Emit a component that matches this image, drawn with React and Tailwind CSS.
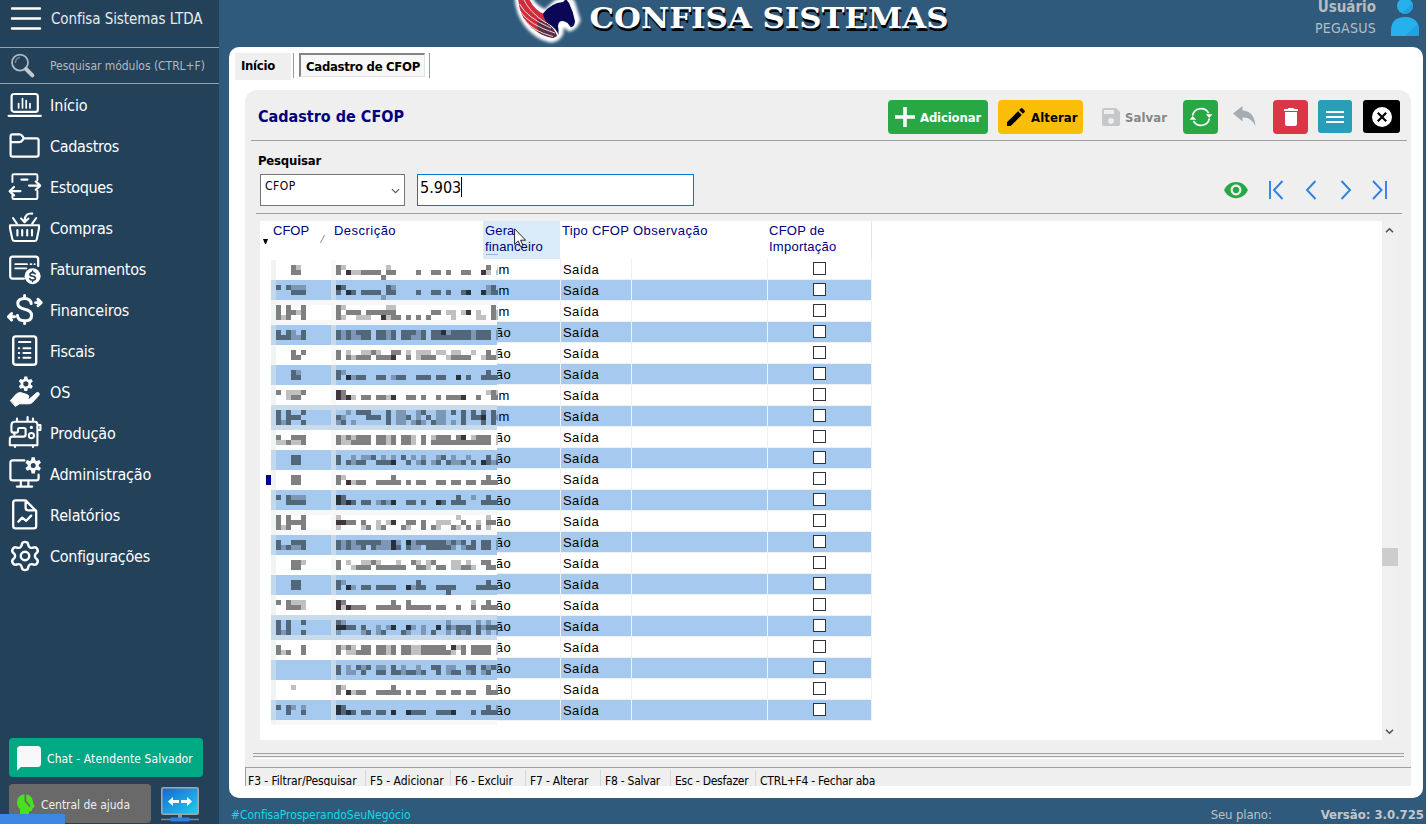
import React from "react";
import { MdEdit, MdSave, MdDelete, MdRemoveRedEye } from "react-icons/md";
import { Settings } from "lucide-react";

const gear = (cx, cy, r1, r2, n) => {
  const p = [];
  for (let i = 0; i < n; i++) {
    const a = (i / n) * Math.PI * 2 - Math.PI / 2;
    const w = Math.PI / n;
    [[-0.75, r1], [-0.38, r2], [0.38, r2], [0.75, r1]].forEach(([k, r]) =>
      p.push(`${(cx + r * Math.cos(a + k * w)).toFixed(2)} ${(cy + r * Math.sin(a + k * w)).toFixed(2)}`)
    );
  }
  return `M${p.join("L")}Z`;
};

const icons = {
  inicio: (
    <>
      <rect x="4.6" y="7" width="26.2" height="17.8" rx="2.4" />
      <path d="M1.6 28.8H33.8" />
      <path d="M11.6 21V16.6M15.5 21V11.6M19.2 21V13.6M23 21V16.6" strokeWidth="1.7" />
    </>
  ),
  cadastros: (
    <path d="M3.6 14.8V8.4Q3.6 6.4 5.4 6.4H12.6Q14.4 6.4 15.6 8.4L16.8 10.4H29.6Q31.6 10.4 31.6 12.6V26.4Q31.6 28.6 29.6 28.6H5.6Q3.6 28.6 3.6 26.4V14.2H12.4Q14.6 14 15.6 12L16.8 10.4" />
  ),
  estoques: (
    <>
      <path d="M5.4 13V6.6Q5.4 5.2 6.8 5.2H29Q30.4 5.2 30.4 6.6V11M5.4 26.5V28.4Q5.4 30 6.8 30H28.8Q30.4 30 30.4 28.4V21.6" strokeWidth="1.9" />
      <path d="M14.4 10.6H20.4M22 16.6H33M28.8 12.4L33.2 16.6L28.8 20.8M13.4 22.2H2.8M7 18L2.6 22.2L7 26.4" strokeWidth="2.2" />
    </>
  ),
  compras: (
    <>
      <path d="M3 15.2H32V18.4L29.8 29.2Q29.4 31 27.6 31H7.6Q5.8 31 5.4 29.2L3 18.4Z" strokeWidth="2.1" />
      <path d="M10.4 20V25.4M15.2 20V25.4M20.2 20V25.4M25 20V25.4M6 8L9.8 13.6M29.2 8L25.2 13.6" strokeWidth="2.1" />
      <path d="M25.2 3.6Q17.8 2.8 17.6 10.6M14 8.4L17.6 12.2L21.4 8.6" strokeWidth="2.1" />
    </>
  ),
  faturamentos: (
    <>
      <path d="M17 27.6H5.6Q3.2 27.6 3.2 25V8.2Q3.2 5.6 5.6 5.6H28.6Q31.2 5.6 31.2 8.2V15" />
      <path d="M8.2 13.2H20M23.6 13.2H24.4M8.2 17.4H19.4M27.4 13.2H27.8" strokeWidth="1.8" />
      <circle cx="25.6" cy="25.2" r="8" fill="#fff" stroke="none" />
      <path d="M28.2 22.8Q27.6 21.6 25.6 21.6Q23 21.6 23 23.4Q23 24.8 25.6 25.2Q28.4 25.6 28.4 27.2Q28.4 29 25.6 29Q23.4 29 22.8 27.6M25.6 20V21.4M25.6 29V30.6" stroke="#24415a" strokeWidth="1.6" />
    </>
  ),
  financeiros: (
    <>
      <path d="M24.2 11.6Q23.6 6.4 17.6 6.4Q10.8 6.4 10.8 11.6Q10.8 16 17.6 17.2Q24.6 18.6 24.6 23.4Q24.6 28.8 17.6 28.8Q10.8 28.8 10.4 23.4M17.6 3.6V6.2M17.6 29V31.6" strokeWidth="3" />
      <path d="M28.6 10.6H32.6M31 7.4L34.2 10.6L31 13.8M7.6 24.8H3.2M4.6 21.6L1.4 24.8L4.6 28" strokeWidth="2.9" />
    </>
  ),
  fiscais: (
    <>
      <rect x="6.2" y="3.4" width="23" height="28.4" rx="2.6" strokeWidth="2.4" />
      <path d="M12 9H23.4M16.4 15.2H23.4M16.4 20H23.4M16.4 24.8H23.4M11.8 15.2H12.2M11.8 20H12.2M11.8 24.8H12.2" strokeWidth="2" />
    </>
  ),
  os: (
    <>
      <path d={`${gear(18.8, 9.8, 5.2, 7.4, 6)}M18.8 7.2a2.6 2.6 0 1 0 0 5.2a2.6 2.6 0 1 0 0-5.2Z`} fill="#fff" fillRule="evenodd" stroke="none" />
      <path d="M3.6 26.4L9.4 20Q12 18 14.6 18.8L20.6 20.8Q22.6 22 21.4 23.8Q20.6 24.6 18.8 24.4L15.4 24.2L22.4 25L29.6 18.8Q31.4 17.8 32.2 19.4Q32.6 20.4 31.8 21.4L25.4 28.4Q24 29.8 21.8 29.8H12.6L8.6 32.2Z" fill="#fff" stroke="#fff" strokeWidth="1" />
    </>
  ),
  producao: (
    <>
      <path d="M7.4 6.8Q4.4 7 4.4 10.4V15.4Q4.4 17.6 6.4 17.6H9.6Q11 17.6 11 16.2V14.2Q11 13 12.4 13H17Q18.6 13 18.6 14.8V19.4Q18.6 21.6 16.4 21.6H5.4Q2.8 21.6 2.8 24.4V30.2H30.4V9.6Q30.4 6.8 27.8 6.8Z" strokeWidth="2.1" />
      <path d="M10 3.6V6M20.6 2.2V6M26 3.6V6M31 10H33.4V15H31M8 30.6V32M26 30.6V32M7.4 17.8V20" strokeWidth="2.2" />
      <circle cx="24.4" cy="20.6" r="2.6" strokeWidth="2" />
      <circle cx="24.4" cy="12.4" r="1.6" fill="#fff" stroke="none" />
    </>
  ),
  administracao: (
    <>
      <path d="M17.4 4.4H5.6Q3.4 4.4 3.4 6.8V22Q3.4 24.4 5.6 24.4H29.4Q31.6 24.4 31.6 22V18.6" strokeWidth="2.2" />
      <path d="M13.8 25V30M21.4 25V30M9.8 30.6H25.2" strokeWidth="2.2" />
      <path d={`${gear(26.2, 9.4, 5.6, 8.2, 6)}M26.2 6.9a2.5 2.5 0 1 0 0 5a2.5 2.5 0 1 0 0-5Z`} fill="#fff" fillRule="evenodd" stroke="none" />
    </>
  ),
  relatorios: (
    <>
      <path d="M18.6 3.4H8.6Q6.2 3.4 6.2 5.8V29Q6.2 31.4 8.6 31.4H26.8Q29.2 31.4 29.2 29V14L18.6 3.4V10.6Q18.6 13.4 21.4 13.4H29" strokeWidth="2.3" />
      <path d="M11.4 24.6L15.2 20.6L19.2 23.8L24.2 18.6" strokeWidth="2.3" />
    </>
  ),
};

const menu = [
  ["inicio", "Início", "tracking-[-0.1px]"],
  ["cadastros", "Cadastros", "tracking-[-0.32px]"],
  ["estoques", "Estoques", "tracking-[-0.35px]"],
  ["compras", "Compras", "tracking-[-0.2px]"],
  ["faturamentos", "Faturamentos", "tracking-[-0.26px]"],
  ["financeiros", "Financeiros", "tracking-[-0.15px]"],
  ["fiscais", "Fiscais", "tracking-[-0.3px]"],
  ["os", "OS", "tracking-[-0.1px]"],
  ["producao", "Produção", "tracking-[-0.1px]"],
  ["administracao", "Administração", "tracking-[-0.17px]"],
  ["relatorios", "Relatórios", "tracking-[-0.15px]"],
  ["configuracoes", "Configurações", "tracking-[-0.25px]"],
];

function MenuIcon({ name }) {
  if (name === "configuracoes") return <Settings className="mx-px h-[34px] w-[34px] shrink-0 text-white" strokeWidth={1.7} />;
  return (
    <svg viewBox="0 0 36 36" className="h-9 w-9 shrink-0" fill="none" stroke="#fff" strokeWidth="2.2" strokeLinecap="round" strokeLinejoin="round">
      {icons[name]}
    </svg>
  );
}

function Sidebar() {
  return (
    <aside className="flex h-full w-[219px] shrink-0 flex-col bg-[#24415a] text-white">
      <div className="flex h-12 shrink-0 items-start border-b border-[#9aa1a6] pl-[10px]">
        <svg viewBox="0 0 32 40" className="h-10 w-8 shrink-0" stroke="#fff" strokeWidth="2.4" strokeLinecap="round">
          <path d="M2 8.5H30M2 18.5H30M2 28.5H30" />
        </svg>
        <span className="ml-[9px] pt-[9px] text-[15px] leading-5 tracking-[-0.08px] text-[#e6ebef]">Confisa Sistemas LTDA</span>
      </div>
      <div className="flex h-9 shrink-0 items-center border-b border-[#9aa1a6] pl-[10px]">
        <svg viewBox="0 0 26 28" className="h-7 w-[26px] shrink-0" fill="none">
          <circle cx="10" cy="10.6" r="8" stroke="#aeb8c0" strokeWidth="1.8" />
          <path d="M5.4 11Q5.6 6 10 5.4" stroke="#7e909f" strokeWidth="1.2" />
          <path d="M16 17L22.4 23.4" stroke="#c3c8cc" strokeWidth="4" strokeLinecap="round" />
        </svg>
        <span className="ml-[14px] text-[12px] leading-4 tracking-[-0.04px] text-[#b3babf]">Pesquisar módulos (CTRL+F)</span>
      </div>
      <nav className="flex flex-col pt-[3px]">
        {menu.map(([icon, label, tracking]) => (
          <div key={icon} className="mb-[5px] flex h-9 items-center pl-[7px]">
            <MenuIcon name={icon} />
            <span className={`ml-[7px] pt-px text-[16px] leading-5 ${tracking}`}>{label}</span>
          </div>
        ))}
      </nav>
      <div className="mt-auto flex flex-col gap-[7px] pb-px pl-[9px]">
        <div className="flex h-[39px] w-[194px] items-center rounded bg-[#00a884] pl-[7px]">
          <svg viewBox="0 0 26 26" className="h-[26px] w-[26px] shrink-0">
            <path d="M4.5 1H21.5Q25 1 25 4.5V18.5Q25 22 21.5 22H5L1 25.5V4.5Q1 1 4.5 1Z" fill="#f7f8f8" />
          </svg>
          <span className="ml-[5px] whitespace-nowrap pt-[2px] text-[12px] leading-4 tracking-[0.12px]">Chat - Atendente Salvador</span>
        </div>
        <div className="flex h-[39px] items-center">
          <div className="flex h-[39px] w-[142px] items-center rounded bg-[#696969] pl-[7px]">
            <svg viewBox="0 0 20 22" className="h-[22px] w-5 shrink-0">
              <path d="M9 1Q1 2 1 9.5Q1 13.5 4 16V22H13V18.5Q16.5 19 16.5 15.5L18.8 13.5Q17 11 17 8.5Q16 1.5 9 1Z" fill="#4be01f" />
              <path d="M9.4 0V8L14 13.5" stroke="#696969" strokeWidth="1.8" fill="none" />
            </svg>
            <span className="ml-[5px] pt-[2px] text-[12px] leading-4 tracking-[-0.04px] text-[#eee]">Central de ajuda</span>
          </div>
          <svg viewBox="0 0 40 37" className="ml-[9px] h-[37px] w-10 shrink-0">
            <defs>
              <linearGradient id="screen" x1="0" y1="0" x2="1" y2="1">
                <stop offset="0" stopColor="#1566d0" />
                <stop offset="0.5" stopColor="#1c9ce2" />
                <stop offset="1" stopColor="#1fd0ea" />
              </linearGradient>
            </defs>
            <rect x="1.8" y="2.8" width="36.4" height="26.4" rx="1.5" fill="url(#screen)" stroke="#a3a6aa" strokeWidth="1.6" />
            <path d="M1 34.5H39" stroke="#7a8793" strokeWidth="1.5" />
            <path d="M20 30V33" stroke="#8c979f" strokeWidth="4" />
            <rect x="10" y="32.5" width="20" height="4" rx="1.5" fill="#2a7fe0" />
            <path d="M8 16.5L13 12V15H19V18H13V21ZM32 16.5L27 12V15H21V18H27V21Z" fill="#fff" />
          </svg>
        </div>
      </div>
    </aside>
  );
}

function Logo() {
  return (
    <svg viewBox="0 0 450 47" className="h-[47px] w-[450px]">
      <defs>
        <filter id="halo" x="-20%" y="-20%" width="140%" height="140%">
          <feGaussianBlur stdDeviation="1.4" />
        </filter>
      </defs>
      <path d="M16 -3Q17 14 26 25Q36 38 50 41Q59 41 62 33V28L65 26L69 30Q76 29 79 20L73 1L67 -2L56 1L45 11Q35 7 30 -3Z" fill="#fff" stroke="#fff" strokeWidth="3" filter="url(#halo)" />
      <path d="M18 -3Q19 14 27 23Q37 35 53 38L57 36Q54 28 47 24L44 14Q34 10 28 -3Z" fill="#cf2d3d" />
      <path d="M37 19L46 23Q54 27 57 36L53 38Q43 36 38 32Z" fill="#5a2e42" />
      <path d="M23 -2Q29 12 46 23M19.5 4Q27 18 51 28M20 11Q29 25 55 33M23 18Q32 31 53 36.5" stroke="#fff" strokeWidth="0.8" fill="none" />
      <path d="M43 13.5Q51 3 63 2L66 -1L69 3Q73 11 75 21Q75 26 71 27.5L67.5 23Q63 20 60 21.5Q57 24 58.5 29V35Q56 28 48 23.5Q44 20 43 13.5Z" fill="#0b0757" />
      <g fontFamily="'DejaVu Serif', serif" fontWeight="700" fontSize="27">
        <text x="90.5" y="30.5" textLength="359" lengthAdjust="spacingAndGlyphs" fill="#000">CONFISA SISTEMAS</text>
        <text x="89.5" y="28" textLength="359" lengthAdjust="spacingAndGlyphs" fill="#fff">CONFISA SISTEMAS</text>
      </g>
    </svg>
  );
}

function Header() {
  return (
    <header className="flex h-[47px] shrink-0 items-start justify-between overflow-hidden pl-[281px] pr-[6px]">
      <Logo />
      <div className="flex items-start">
        <div className="flex flex-col items-end text-[#b9bcbf]">
          <span className="-mt-[3px] text-[15px] font-bold leading-5">Usuário</span>
          <span className="mt-px text-[14px] leading-5 tracking-[0.27px]">PEGASUS</span>
        </div>
        <svg viewBox="0 0 30 37" className="ml-[14px] h-[37px] w-[30px]">
          <circle cx="15" cy="5.8" r="8" fill="#27b1ec" />
          <path d="M1 36V31Q1 17 15 17Q29 17 29 31V34Q29 36 27 36Z" fill="#27b1ec" />
          <path d="M15 36L28 24Q29 27 29 34Q29 36 27 36ZM12 13.5L22 3.5Q24 8 20.5 11.5Q17 14.5 12 13.5Z" fill="#22a0e4" />
        </svg>
      </div>
    </header>
  );
}

function Tabs() {
  return (
    <div className="flex h-[43px] pl-[6px] pt-[6px] text-[13px] font-bold text-black">
      <div className="h-[27px] w-14 bg-[#efefef] pl-[6px] pt-[4px] leading-[17px] tracking-[-0.28px]">Início</div>
      <div className="ml-[2px] h-[25px] w-px bg-[#9a9a9a]" />
      <div className="ml-[5px] h-6 w-[126px] whitespace-nowrap border-b border-l-2 border-r border-t-2 border-b-[#e3e3e3] border-l-[#858585] border-r-[#e3e3e3] border-t-[#858585] bg-[#f8f8f8] pl-[5px] pt-[3px] leading-[17px] tracking-[-0.29px]">
        Cadastro de CFOP
      </div>
      <div className="ml-1 h-[25px] w-px bg-[#9a9a9a]" />
    </div>
  );
}

function Toolbar() {
  return (
    <div className="mx-[6px] mr-1 flex h-[51px] items-start border-b border-[#a0a0a0] pl-[7px] pr-[7px] pt-[10px] text-[13px] font-bold">
      <h1 className="mt-[7px] text-[16px] font-bold leading-5 text-[#000080]">Cadastro de CFOP</h1>
      <div className="ml-auto flex items-start">
        <div className="flex h-[34px] w-[100px] items-center rounded-sm bg-[#28a745] pl-[7px] text-white">
          <svg viewBox="0 0 20 20" className="h-5 w-5" stroke="#fff" strokeWidth="3.6">
            <path d="M10 0V20M0 10H20" />
          </svg>
          <span className="ml-[5px] pt-px tracking-[-0.15px]">Adicionar</span>
        </div>
        <div className="ml-[10px] flex h-[34px] w-[85px] items-center rounded-sm bg-[#fcbd08] pl-[6px] text-black">
          <MdEdit className="h-6 w-6" />
          <span className="ml-[3px] pt-px tracking-[0.1px]">Alterar</span>
        </div>
        <div className="flex h-[34px] w-[100px] items-center pl-[16px] text-[#868686]">
          <MdSave className="h-6 w-6 text-[#c6c7c8]" />
          <span className="ml-[2px] pt-px tracking-[0.07px]">Salvar</span>
        </div>
        <div className="flex h-[34px] w-[35px] items-center justify-center rounded-sm bg-[#28a745]">
          <svg viewBox="0 0 24 24" className="h-6 w-6" fill="none" stroke="#fff" strokeWidth="1.7">
            <path d="M3.6 10.5A8.6 8.6 0 0 1 19.6 8.2M20.4 13.5A8.6 8.6 0 0 1 4.4 15.8" />
            <path d="M16.8 9.2H23.4L20.3 13ZM7.2 14.8H.6L3.7 11Z" fill="#fff" stroke="none" />
          </svg>
        </div>
        <svg viewBox="0 0 24 24" className="ml-[14px] mt-[5px] h-6 w-6">
          <path d="M1 8.5L10.5 1V5.5Q22.5 6 23.5 21.5Q19.5 12 10.5 12.5V16.5Z" fill="#a3adb3" />
        </svg>
        <div className="ml-[17px] flex h-[34px] w-[35px] items-center justify-center rounded-sm bg-[#dc3545]">
          <MdDelete className="h-6 w-6 text-white" />
        </div>
        <div className="ml-[10px] flex h-[33px] w-[34px] items-center justify-center rounded-[3px] bg-[#289fb7]">
          <svg viewBox="0 0 18 14" className="h-[14px] w-[18px]" stroke="#fff" strokeWidth="1.8">
            <path d="M0 2H18M0 7H18M0 12H18" />
          </svg>
        </div>
        <div className="ml-[11px] flex h-[33px] w-[37px] items-center justify-center rounded-[3px] bg-black">
          <svg viewBox="0 0 20 20" className="h-5 w-5">
            <circle cx="10" cy="10" r="10" fill="#fff" />
            <path d="M5.8 5.8L14.2 14.2M14.2 5.8L5.8 14.2" stroke="#000" strokeWidth="2.2" />
          </svg>
        </div>
      </div>
    </div>
  );
}

function SearchBar() {
  return (
    <div className="ml-[11px] mr-[9px] h-[73px] border-b border-[#a0a0a0] pl-[2px] pt-[11px]">
      <div className="text-[13px] font-bold leading-[17px] tracking-[-0.2px]">Pesquisar</div>
      <div className="mt-[5px] flex h-8 pl-[2px]">
        <div className="flex h-8 w-[145px] justify-between border border-[#767676] bg-white pl-1 pr-[4px] pt-1">
          <span className="text-[12px] leading-[15px] tracking-[0.5px]">CFOP</span>
          <svg viewBox="0 0 10 6" className="mt-[9px] h-[6px] w-[9px]" fill="none" stroke="#555" strokeWidth="1.2">
            <path d="M1 .8L5 4.8L9 .8" />
          </svg>
        </div>
        <div className="ml-3 flex h-8 w-[277px] border border-[#0078d7] bg-white pl-[2px] pt-[2px]">
          <span className="pt-px text-[16px] leading-5">5.903</span>
          <span className="h-5 w-px bg-black" />
        </div>
        <div className="ml-auto flex items-center pr-[12px]">
          <MdRemoveRedEye className="mr-px h-[26px] w-[26px] text-[#28a745]" />
          <svg viewBox="0 0 124 22" className="ml-4 h-[22px] w-[124px]" fill="none" stroke="#2f80e6" strokeWidth="1.9">
            <path d="M4 2V20M16.5 2L8 11L16.5 20M49.5 2L41 11L49.5 20M75.5 2L84 11L75.500 20M107 2L115.500 11L107 20M120 2V20" />
          </svg>
        </div>
      </div>
    </div>
  );
}

const gera = ["Sim", "Sim", "Sim", "Não", "Não", "Não", "Sim", "Sim", ...Array(14).fill("Não")];

/* Obscured text: one entry per 5px line; "a-b" ranges of cells, # mid, + light, @ dark */
const blocks = [
  [265, "4# 5+", "0# 1+ 10+ 30#"],
  [270, "4-5#", "0# 2@ 3-4+ 5-8# 10-11# 16# 19-20# 22# 25-26# 29@ 30+ 32+"],
  [275, "", "9#"],
  [285, "1# 3# 4-6+", "0@ 1# 10# 11+ 30+ 31#"],
  [290, "4-6#", "0# 2@ 3# 5-8# 10-11# 16# 19-20# 22# 25# 26@ 29@ 30+ 31-32#"],
  [295, "", "9+"],
  [305, "1# 3# 6#", "0# 1+ 10-11+ 31#"],
  [310, "1# 3-4# 5+ 6#", "0# 2-4# 6-11# 19-20# 22-23+ 25+ 26@ 28+ 31# 32+"],
  [315, "1# 2+ 3# 6#", "0# 1+ 4-6+ 9@ 10+ 11-12# 14# 16# 18# 23+ 28+ 29+ 31# 32+"],
  [330, "1# 3# 4+ 6#", "0# 1+ 2# 3+ 4-6# 8-9# 10+ 11# 13-15# 16+ 17# 19-20# 21@ 22+ 23-26# 27+ 28-30# 32+"],
  [335, "1-3# 4-5+ 6#", "0# 1+ 2# 3+ 4+ 5-6# 8-9# 10+ 11# 13-14# 15-16+ 17# 19-22# 23-26# 27+ 28-30# 32+"],
  [350, "4# 6#", "0# 2+ 5-6+ 7# 8+ 11-12# 14+ 16-18+ 20-21+ 23-24+ 27+ 30# 32+"],
  [355, "4-5#", "0# 2# 3+ 4-6# 8-10# 11@ 14# 16+ 17-19# 22+ 23-26# 29+ 30-31# 32+"],
  [370, "4# 5+", "0# 1+ 30#"],
  [375, "4-5#", "0# 2@ 3+ 4-5# 8-9# 11+ 12-13# 16-18# 20-21# 24@ 26# 29-32#"],
  [390, "1# 3+ 4-5+ 6#", "0@ 1# 30+ 31# 32+"],
  [395, "3+ 4-5#", "0@ 1# 2@ 3+ 5-6# 8-9# 10+ 11@ 14-15# 17# 20# 22-24# 25@ 28# 31-32#"],
  [410, "1# 3# 6#", "2+ 4-6# 10# 12-13+ 16+ 17# 20-21+ 23# 25# 27# 29# 31#"],
  [415, "1# 3-5#", "0# 1+ 6-8# 10# 12-13+ 14# 16+ 18# 20-21+ 25# 27-28# 29@ 31# 32+"],
  [420, "1# 2+ 3# 6#", "0+ 1# 3+ 10# 12-13+ 15+ 16# 17+ 19# 20-21+ 23+ 25# 29# 31#"],
  [435, "1# 4-6#", "0# 1+ 2# 3+ 4-6# 8-9# 10+ 11# 13-14# 15+ 17# 19+ 20-22# 24# 25@ 27+ 28-30# 32+"],
  [440, "1-2+ 3# 4-5+ 6#", "0# 1+ 2+ 3-6# 8-9# 10+ 11# 13-14# 15+ 17# 19-30# 32+"],
  [455, "4-5#", "0# 3+ 5-6+ 7# 9+ 11+ 13# 15+ 17+ 20+ 21# 23+ 26+ 30# 32+"],
  [460, "4-5#", "0# 2# 3+ 4-5# 8-10# 11@ 14# 16+ 17# 19+ 20# 22# 23-24+ 25# 27# 29@ 30# 31+ 32#"],
  [475, "4-5#", "0# 1+ 11# 30#"],
  [480, "4-5#", "0# 2@ 3+ 4-5# 8-12# 14# 16-17# 20-21# 23-24# 26-27# 29-32#"],
  [495, "1# 3# 4-6+", "0@ 1# 24# 27+ 30#"],
  [500, "3-6#", "0@ 1# 2@ 3# 5-6# 8+ 9# 10+ 11@ 14-15# 17# 20@ 21# 23-25# 29-32#"],
  [515, "1# 3# 6#", "0+ 24+ 30+"],
  [520, "1# 3-6#", "0-1@ 2-3# 5# 8+ 10+ 11@ 14-15# 17# 20-22+ 25# 28+ 30-31#"],
  [525, "1# 2+ 3# 6#", "0+ 5+ 6# 8+ 9# 13# 14+ 17# 19# 20+ 23# 24+ 26# 28# 30+"],
  [540, "1# 4-6#", "0# 1+ 2# 3+ 4# 5-8# 9-10+ 11@ 12+ 14@ 15+ 16-21# 22+ 23# 24+ 25# 27# 29-30# 32+"],
  [545, "1# 2+ 3# 4-5+ 6#", "0# 1+ 2# 3-4+ 5# 7# 8-10+ 11@ 12# 14# 15+ 16+ 18-21# 22# 23+ 25+ 26# 27# 29-30# 32+"],
  [560, "4-5# 6+", "0# 2+ 5-6+ 7# 8+ 12+ 15# 16+ 18+ 19# 23+ 24+ 26+ 29-30#"],
  [565, "4-5#", "0# 3+ 4-6# 8-9# 10-13# 16-17# 18+ 20-21# 23-24+ 25-26# 27+ 30-31#"],
  [580, "4-5#", "0# 1+ 16# 30#"],
  [585, "4-5#", "0# 2@ 3+ 5-6# 8-11# 14@ 15+ 16-17# 20-23# 28-32#"],
  [590, "", "22#"],
  [600, "1# 3# 4-5+ 6+", "0@ 1# 11# 14# 27+ 30#"],
  [605, "3-5# 6+", "0@ 1+ 2@ 3-5# 8-12# 14-18# 20-21# 24# 27# 29-32#"],
  [620, "1# 3# 6#", "0# 1+ 22+ 28+ 30+"],
  [625, "1# 3#", "0-1@ 2-3# 5# 8+ 10+ 11@ 14@ 15+ 17+ 20@ 22# 23+ 24-26# 28# 29+ 30-32#"],
  [630, "1# 2+ 3# 6#", "0+ 5+ 6# 8+ 9# 13# 14+ 17+ 19# 22+ 24# 25+ 26# 28# 30+ 32+"],
  [645, "1# 6#", "0# 1+ 2# 3+ 5-6# 8-9# 10+ 11# 13-14# 15-16+ 17-21# 23@ 24+ 25# 27-30# 32+"],
  [650, "1# 2+ 3# 6#", "0# 2+ 3+ 4-6# 8-9# 10+ 11# 13-14# 15-16+ 17-22# 23+ 25# 27-30# 32+"],
  [665, "", "0# 2+ 4# 5+ 6# 8+ 9+ 11# 13+ 16+ 19-20# 22+ 23+ 26-27# 29# 30+ 31# 32+"],
  [670, "", "0# 2+ 3+ 5# 8# 9# 11-12# 13+ 14-15# 16+ 17# 20# 22+ 23-24# 26+ 27# 29+ 30#"],
  [685, "4+", "0# 1+ 11# 30# 32+"],
  [690, "", "0# 2@ 3+ 4-5# 8-12# 14# 16-17# 20-21# 23-24# 26-27# 30-32#"],
  [705, "1# 3# 4+ 6+", "0@ 1# 30# 32+"],
  [710, "3# 6#", "0@ 1# 2@ 3# 5-6# 8-9# 11@ 14@ 15-17# 20-21# 22# 23@ 27# 29-32#"],
];
const blueBands = [[280, 300], [325, 345], [365, 385], [410, 425], [450, 470], [490, 510], [535, 555], [575, 595], [620, 635], [660, 680], [700, 720]];
const paleBands = [[405, 410], [425, 430], [615, 620], [635, 640]];
const grayBands = [[300, 305], [320, 325], [510, 515], [530, 535], [720, 725]];
const tones = { white: { "#": "#808080", "+": "#c0c0c0", "@": "#40353d" }, blue: { "#": "#53677b", "+": "#7c98b6", "@": "#27313b" } };

const runs = (s) =>
  s.split(" ").filter(Boolean).map((t) => {
    const [a, b] = t.slice(0, -1).split("-").map(Number);
    return { a, b: b === undefined ? a : b, k: t.slice(-1) };
  });

function Mosaic() {
  const isBlue = (y) => blueBands.some(([a, b]) => y >= a && y < b);
  return (
    <svg viewBox="271 259 230 466" className="absolute left-[11px] top-[38px] h-[466px] w-[230px]" shapeRendering="crispEdges">
      <rect x="271" y="259" width="226" height="466" fill="#fff" />
      <rect x="271" y="260" width="5" height="465" fill="#f2f3f3" />
      <rect x="331" y="260" width="5" height="465" fill="#f8f8f8" />
      {grayBands.map(([a, b]) => <rect key={a} x="276" y={a} width="221" height={b - a} fill="#f7f7f7" />)}
      {paleBands.map(([a, b]) => <rect key={a} x="271" y={a} width="226" height={b - a} fill="#cadcec" />)}
      {blueBands.map(([a, b]) => (
        <g key={a}>
          <rect x="271" y={a} width="226" height={b - a} fill="#a6c9ef" />
          <rect x="271" y={a} width="5" height={b - a} fill="#c2d8eb" />
          <rect x="331" y={a} width="5" height={b - a} fill="#c6daec" />
        </g>
      ))}
      {blocks.map(([y, code, desc]) => {
        const tone = isBlue(y) ? tones.blue : tones.white;
        const draw = (x0, list, id) =>
          list.map(({ a, b, k }) => {
            const x = x0 + 5 * a;
            const w = Math.min(5 * (b - a + 1), 498 - x);
            return <rect key={id + a} x={x} y={y} width={w} height="5" fill={tone[k]} />;
          });
        return (
          <g key={y}>
            {draw(271, runs(code), "c")}
            {draw(336, runs(desc), "d")}
          </g>
        );
      })}
    </svg>
  );
}

const cols = "grid grid-cols-[11px_61px_152px_77px_71px_136px_104px]";

function Grid() {
  return (
    <div className="ml-[15px] mr-[13px] mt-[7px] flex h-[519px] font-['Liberation_Sans',Arial,sans-serif] text-[13px]">
      <div className="relative min-w-0 flex-1 bg-white">
        <div className={`${cols} h-[38px] w-[612px] border-r border-[#e6e6e6] pt-[2px] leading-4 text-[#000080]`}>
          <div className="flex items-end pb-[15px] pl-[3px]">
            <svg viewBox="0 0 5 5" className="h-[5px] w-[5px]"><path d="M0 0H5L3 5H2Z" fill="#000" /></svg>
          </div>
          <div className="flex justify-between pl-[2px] pr-[7px]">
            <span>CFOP</span>
            <svg viewBox="0 0 5 8" className="mt-3 h-2 w-[5px]"><path d="M4.5 0L.5 8" stroke="#888" strokeWidth="1" /></svg>
          </div>
          <div className="pl-[2px] tracking-[0.47px]">Descrição</div>
          <div className="-ml-px -mt-[2px] mr-px bg-[#d9ebf9] pl-[2px] pt-[2px] tracking-[0.15px]">Gera<br />financeiro</div>
          <div className="whitespace-nowrap pl-px tracking-[0.3px]">Tipo CFOP</div>
          <div className="pl-px tracking-[0.49px]">Observação</div>
          <div className="pl-px tracking-[0.25px]">CFOP de<br />Importação</div>
        </div>
        {gera.map((g, i) => (
          <div key={i} className={`${cols} h-[21px] w-[612px] grid-rows-[21px] leading-[21px] text-black`}>
            <div />
            {["", "", g, "Saída", ""].map((t, j) => (
              <div key={j} className={`h-[21px] border-b border-r border-[#f0f0f0] pl-[2px] tracking-[0.41px] ${i % 2 ? "bg-[#a6c9ef]" : "bg-white"}`}>{t}</div>
            ))}
            <div className={`flex h-[21px] justify-center border-b border-r border-[#f0f0f0] pt-[3px] ${i % 2 ? "bg-[#a6c9ef]" : "bg-white"}`}>
              <span className="h-[13px] w-[13px] border border-[#333] bg-white" />
            </div>
          </div>
        ))}
        <Mosaic />
        <div className="absolute left-[6px] top-[254px] h-[10px] w-[5px] bg-[#00008b]" />
        <div className="absolute left-[226px] top-[33px] h-px w-3 bg-[#8fb8de]" />
        <svg viewBox="0 0 13 20" className="absolute left-[254px] top-[7px] h-5 w-[13px]">
          <path d="M.6 .8V16.4L4.2 13L6.6 18.7L9 17.7L6.6 12.2H11.6Z" fill="#fff" stroke="#222" strokeWidth="1" />
        </svg>
      </div>
      <div className="flex w-4 flex-col items-center bg-[#f0f0f0]">
        <svg viewBox="0 0 10 8" className="ml-[-2px] mt-[6px] h-[7px] w-[9px]" fill="none" stroke="#505050" strokeWidth="1.8"><path d="M1 6L5 2L9 6" /></svg>
        <div className="mt-[314px] h-[18px] w-4 bg-[#cdcdcd]" />
        <svg viewBox="0 0 10 8" className="mb-[5px] ml-[-2px] mt-auto h-[7px] w-[9px]" fill="none" stroke="#505050" strokeWidth="1.8"><path d="M1 2L5 6L9 2" /></svg>
      </div>
    </div>
  );
}

const shortcuts = [
  ["F3 - Filtrar/Pesquisar", "w-[120px] pl-[2px] tracking-[-0.08px]"],
  ["F5 - Adicionar", "w-[85px] pl-[4px] tracking-[-0.05px]"],
  ["F6 - Excluir", "w-[75px] pl-[4px] tracking-[-0.2px]"],
  ["F7 - Alterar", "w-[75px] pl-[4px] tracking-[-0.2px]"],
  ["F8 - Salvar", "w-[70px] pl-[4px] tracking-[-0.25px]"],
  ["Esc - Desfazer", "w-[85px] pl-[4px] tracking-[-0.25px]"],
  ["CTRL+F4 - Fechar aba", "flex-1 border-r-0 pl-[4px] tracking-[-0.25px]"],
];

export default function App() {
  return (
    <div className="relative flex h-[824px] w-[1426px] overflow-hidden bg-[#2f5a7c] font-['DejaVu_Sans_Condensed','DejaVu_Sans',Tahoma,sans-serif] [font-stretch:condensed]">
      <Sidebar />
      <div className="flex min-w-0 flex-1 flex-col">
        <Header />
        <main className="ml-[10px] mr-[3px] flex h-[751px] flex-col rounded-[10px] bg-white">
          <Tabs />
          <section className="ml-4 mr-3 flex h-[696px] flex-col overflow-hidden rounded-t-[12px] bg-[#efefef]">
            <Toolbar />
            <SearchBar />
            <Grid />
            <div className="ml-2 mr-[7px] mt-[13px] h-[6px] shrink-0 border-b border-t border-[#a0a0a0] border-b-white pt-[2px]">
              <div className="h-px bg-[#a0a0a0]" />
            </div>
            <div className="mt-2 flex h-[19px] shrink-0 overflow-hidden border-l border-t border-[#a0a0a0] pt-[2px] text-[12px] leading-[22px] text-black">
              {shortcuts.map(([t, cls]) => (
                <div key={t} className={`whitespace-nowrap border-r border-[#d7d7d7] ${cls}`}>{t}</div>
              ))}
            </div>
          </section>
        </main>
        <footer className="flex h-[26px] items-center pl-3 pr-[2px] pt-[7px] leading-4">
          <span className="text-[12px] tracking-[-0.04px] text-[#10dbe6]">#ConfisaProsperandoSeuNegócio</span>
          <span className="ml-auto text-[13px] tracking-[-0.11px] text-[#bcc0c4]">Seu plano:</span>
          <span className="ml-[49px] text-[13px] font-bold text-[#c4c7ca]">Versão: 3.0.725</span>
        </footer>
      </div>
      <div className="absolute bottom-0 left-0 h-[10px] w-[65px] bg-[#3c86e4]" />
    </div>
  );
}
